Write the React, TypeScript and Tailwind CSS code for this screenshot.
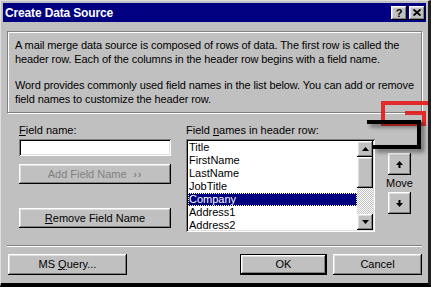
import React from "react";

const raised =
  "bg-[#c0c0c0] shadow-[inset_-1px_-1px_0_#000,inset_1px_1px_0_#fff,inset_-2px_-2px_0_#808080,inset_2px_2px_0_#dfdfdf]";
const sunken =
  "bg-white shadow-[inset_1px_1px_0_#808080,inset_-1px_-1px_0_#fff,inset_2px_2px_0_#000,inset_-2px_-2px_0_#dfdfdf]";

const fields = ["Title", "FirstName", "LastName", "JobTitle", "Company", "Address1", "Address2"];

function Arrow({ dir }: { dir: "up" | "down" }) {
  return (
    <svg width="7" height="4" viewBox="0 0 7 4" className={dir === "down" ? "rotate-180" : ""}>
      <polygon points="3.5,0 7,4 0,4" fill="#000" />
    </svg>
  );
}

function MoveArrow({ dir }: { dir: "up" | "down" }) {
  return (
    <svg width="7" height="7" viewBox="0 0 7 7" className={dir === "down" ? "rotate-180" : ""}>
      <polygon points="3.5,0 7,4 0,4" fill="#000" />
      <rect x="2.5" y="4" width="2" height="3" fill="#000" />
    </svg>
  );
}

export default function App() {
  return (
    <div className="relative w-[431px] h-[287px] overflow-hidden bg-[#c0c0c0] font-['Liberation_Sans',Arial,sans-serif] text-[11px] text-black border-t border-l border-t-[#dfdfdf] border-l-[#dfdfdf] border-r-[3px] border-r-[#202020] border-b-[4px] border-b-black">
      {/* caption */}
      <div className="mx-[2px] mt-[2px] h-[19px] bg-[#000080] flex items-center justify-between pl-[2px] pr-[1px]">
        <span className="text-white font-bold text-[12px] tracking-[-0.15px]">Create Data Source</span>
        <div className="flex gap-[2px]">
          <div className={`${raised} w-[16px] h-[14px] flex items-center justify-center font-bold text-[11px] leading-none pt-[1px]`}>?</div>
          <div className={`${raised} w-[16px] h-[14px] flex items-center justify-center`}>
            <svg width="8" height="7" viewBox="0 0 8 7">
              <path d="M0.5 0.5 L7.5 6.5 M7.5 0.5 L0.5 6.5" stroke="#000" strokeWidth="1.8" />
            </svg>
          </div>
        </div>
      </div>

      <div className="px-[6px] pt-[9px]">
        {/* info box */}
        <div className="h-[82px] border border-[#808080] shadow-[1px_1px_0_#fff,inset_1px_1px_0_#fff] pl-[7px] pt-[6px] leading-[14px] whitespace-nowrap tracking-[-0.1px]">
          <p>
            A mail merge data source is composed of rows of data. The first row is called the
            <br />
            header row. Each of the columns in the header row begins with a field name.
          </p>
          <p className="mt-[12px]">
            Word provides commonly used field names in the list below. You can add or remove
            <br />
            field names to customize the header row.
          </p>
        </div>

        {/* fields area */}
        <div className="flex h-[109px] mt-[10px]">
          <div className="ml-[12px] w-[152px] flex flex-col">
            <div className="h-[14px] leading-[14px]"><u>F</u>ield name:</div>
            <div className={`${sunken} mt-[2px] h-[17px]`} />
            <div className={`${raised} mt-[8px] h-[20px] flex items-center justify-center text-[#808080]`}>
              Add Field Name <span className="ml-[7px] text-[10px] font-bold tracking-[1px]">››</span>
            </div>
            <div className={`${raised} mt-[24px] h-[20px] flex items-center justify-center`}>
              <span><u>R</u>emove Field Name</span>
            </div>
          </div>

          <div className="ml-[15px] w-[189px] flex flex-col">
            <div className="h-[14px] leading-[14px]">Field <u>n</u>ames in header row:</div>
            <div className={`${sunken} mt-[2px] h-[93px] p-[2px] flex overflow-hidden`}>
              <div className="flex-1 flex flex-col">
                {fields.map((f) => (
                  <div
                    key={f}
                    className={
                      f === "Company"
                        ? "h-[13px] shrink-0 leading-[12px] pl-[1px] bg-[#000080] text-white outline-1 outline-dotted outline-white -outline-offset-1"
                        : "h-[13px] shrink-0 leading-[12px] pl-[1px]"
                    }
                  >
                    {f}
                  </div>
                ))}
              </div>
              <div className="w-[16px] flex flex-col bg-[image:repeating-conic-gradient(#fff_0%_25%,#c0c0c0_0%_50%)] bg-[length:2px_2px]">
                <div className={`${raised} h-[16px] flex items-center justify-center`}><Arrow dir="up" /></div>
                <div className={`${raised} h-[31px]`} />
                <div className="flex-1" />
                <div className={`${raised} h-[16px] flex items-center justify-center`}><Arrow dir="down" /></div>
              </div>
            </div>
          </div>

          <div className="ml-[13px] w-[23px] flex flex-col items-center pt-[30px]">
            <div className={`${raised} w-[23px] h-[22px] flex items-center justify-center`}><MoveArrow dir="up" /></div>
            <div className="h-[17px] leading-[17px]">Move</div>
            <div className={`${raised} w-[23px] h-[22px] flex items-center justify-center`}><MoveArrow dir="down" /></div>
          </div>
        </div>

        {/* separator */}
        <div className="mt-[13px] h-[2px] border-t border-[#808080] border-b border-b-white" />

        {/* bottom buttons */}
        <div className="flex mt-[7px]">
          <div className={`${raised} ml-[1px] w-[119px] h-[21px] flex items-center justify-center`}>
            <span>MS <u>Q</u>uery...</span>
          </div>
          <div className="ml-auto w-[87px] h-[21px] border border-black">
            <div className={`${raised} h-full flex items-center justify-center`}>OK</div>
          </div>
          <div className={`${raised} ml-[6px] w-[89px] h-[21px] flex items-center justify-center`}>Cancel</div>
        </div>
      </div>

      {/* annotation callout */}
      <svg className="absolute left-0 top-0 pointer-events-none" width="431" height="287" viewBox="0 0 431 287">
        <defs>
          <filter id="sh" x="-20%" y="-20%" width="160%" height="160%">
            <feGaussianBlur in="SourceAlpha" stdDeviation="2" />
            <feOffset dx="3" dy="3" result="b" />
            <feComponentTransfer><feFuncA type="linear" slope="0.5" /></feComponentTransfer>
            <feMerge><feMergeNode /><feMergeNode in="SourceGraphic" /></feMerge>
          </filter>
        </defs>
        <polyline points="427,102 382,102 382,123 423,123 423,112 404,112" fill="none" stroke="#e41b1b" strokeWidth="4" opacity="0.9" />
        <polyline points="366,121 418,121 418,146 372,146" fill="none" stroke="#000" strokeWidth="4" filter="url(#sh)" />
      </svg>
    </div>
  );
}
